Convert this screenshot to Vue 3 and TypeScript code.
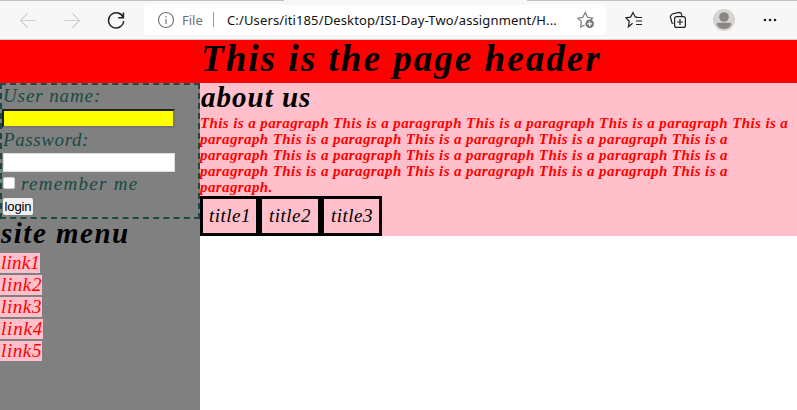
<script setup lang="ts">
import { ref } from 'vue'

interface Item {
  label: string
  kind: string
}

const userName = ref('')
const password = ref('')
const remember = ref(false)

const links: Item[] = [
  { label: 'link1', kind: 'narrow' },
  { label: 'link2', kind: 'medium' },
  { label: 'link3', kind: 'medium' },
  { label: 'link4', kind: 'wide' },
  { label: 'link5', kind: 'medium' },
]
const titles: Item[] = [
  { label: 'title1', kind: 'first' },
  { label: 'title2', kind: 'second' },
  { label: 'title3', kind: 'third' },
]
const paragraph: string = Array(17).fill('This is a paragraph').join(' ') + '.'
</script>

<template>
  <div class="window">
    <header class="toolbar">
      <svg class="nav muted" viewBox="0 0 18 18"><path d="M17 9.5H1.5M8.5 2.5l-7 7 7 7" /></svg>
      <svg class="nav muted forward" viewBox="0 0 18 18"><path d="M1 9.5h15.5M9.5 2.5l7 7-7 7" /></svg>
      <svg class="nav reload" viewBox="0 0 18 18"><path d="M16.4 7.1A7.6 7.6 0 1 0 16.7 10M16.4 1.5v5.2h-5.2" /></svg>
      <div class="address">
        <svg class="info" viewBox="0 0 18 18"><circle cx="9" cy="9" r="7.5" /><path d="M9 8v5M9 5v1.4" /></svg>
        <span class="scheme">File</span>
        <span class="divider"></span>
        <span class="url">C:/Users/iti185/Desktop/ISI-Day-Two/assignment/H...</span>
        <svg class="favourite" viewBox="0 0 18 18">
          <path d="M7.5 14 3.7 16l.7-5.3L1 7.2l4.8-.9L8.3 1.5l2.3 4.8 5 .8-2 2" />
          <circle cx="12.7" cy="12.8" r="4.3" />
          <path class="plus" d="M10.3 12.8h4.8M12.7 10.4v4.8" />
        </svg>
      </div>
      <svg class="tool stars" viewBox="0 0 18 18"><path d="M7.6 12.2 3.4 15.8l.8-5.5L1 6.7l4.6-.6L8 1.5l2.2 4.4 2.3.4M11 6.5h6M11 10h6M11 13.5h6" /></svg>
      <svg class="tool collections" viewBox="0 0 18 18"><path d="M4.5 12.4 3 12 1.3 5.5 3.2 3 10 1.4l2.2.9.7 2.5" /><rect x="5.6" y="5.6" width="10.8" height="10.8" rx="2" /><path d="M11 8v6M8 11h6" /></svg>
      <svg class="avatar" viewBox="0 0 22 22"><circle class="disc" cx="11" cy="11" r="11" /><circle cx="11" cy="8" r="4.8" /><path d="M3.5 15.2q0-1.5 1.8-1.5h11.4q1.8 0 1.8 1.5-2.2 4.8-7.5 4.8t-7.5-4.8" /></svg>
      <svg class="more" viewBox="0 0 14 4"><circle cx="2" cy="2" r="1.3" /><circle cx="7" cy="2" r="1.3" /><circle cx="12" cy="2" r="1.3" /></svg>
    </header>

    <h1 class="page-header">This is the page header</h1>

    <div class="content">
      <aside class="sidebar">
        <form class="login" @submit.prevent>
          <label class="user-label" for="user">User name:</label>
          <input id="user" v-model="userName" class="field highlighted" type="text" />
          <label class="password-label" for="password">Password:</label>
          <input id="password" v-model="password" class="field" type="password" />
          <label class="remember"><input v-model="remember" type="checkbox" /><span>remember me</span></label>
          <button type="submit">login</button>
        </form>
        <h2 class="menu-heading">site menu</h2>
        <nav class="menu">
          <a v-for="link in links" :key="link.label" :class="link.kind">{{ link.label }}</a>
        </nav>
      </aside>
      <main class="about">
        <h2 class="about-heading">about us</h2>
        <p>{{ paragraph }}</p>
        <div class="titles">
          <div v-for="title in titles" :key="title.label" :class="title.kind">{{ title.label }}</div>
        </div>
      </main>
    </div>
  </div>
</template>

<style>
body { margin: 0; overflow: hidden; background: #fff; }
</style>

<style scoped>
* { box-sizing: border-box; }
.window { width: 797px; height: 410px; display: flex; flex-direction: column; overflow: hidden; font-family: "Lucida Calligraphy", "Liberation Serif", serif; font-style: italic; font-size: 19px; }
.toolbar { height: 40px; flex: none; display: flex; align-items: center; padding-left: 19px; background: linear-gradient(90deg, #c2c2c2 284px, #f7f7f7 284px, #f7f7f7 527px, #c2c2c2 527px) top / 100% 1px no-repeat, #f7f7f7; border-bottom: 1px solid #d0d0d0; font-family: "Noto Sans", sans-serif; font-style: normal; }
svg { flex: none; fill: none; stroke: #202020; stroke-width: 1.2; }
.nav { width: 18px; height: 18px; }
.muted { stroke: #cfcfcf; }
.forward { margin-left: 26px; }
.reload { margin-left: 26px; stroke-width: 1.5; }
.address { width: 462px; height: 30px; margin-left: 19px; padding-left: 13px; display: flex; align-items: center; background: #fff; border-radius: 4px; white-space: nowrap; }
.info { width: 18px; height: 18px; stroke: #777; }
.scheme { width: 31px; margin-left: 7px; font-size: 13px; color: #707070; }
.divider { width: 1px; height: 15px; background: #999; }
.url { width: 331px; margin-left: 13px; font-size: 13px; letter-spacing: 0.13px; color: #111; }
.favourite { width: 18px; height: 18px; margin-left: 19px; stroke: #777; }
.favourite circle { fill: #777; stroke: none; }
.favourite .plus { stroke: #fff; }
.tool { width: 18px; height: 18px; }
.stars { margin-left: 19px; }
.collections { margin-left: 26px; }
.avatar { width: 22px; height: 22px; margin-left: 26px; fill: #8a8783; stroke: none; }
.avatar .disc { fill: #d6d4d0; }
.more { width: 14px; height: 4px; margin-left: 28px; fill: #202020; stroke: none; }

.page-header { height: 43px; flex: none; margin: 0; padding-left: 201px; background: red; color: #000; font-size: 37px; line-height: 38px; letter-spacing: 2.05px; white-space: nowrap; }
.content { flex: 1; display: flex; align-items: flex-start; }
.sidebar { width: 200px; height: 327px; background: gray; }
.login { height: 136px; padding: 0 1px; border: 2px dashed #194a43; color: #194a43; display: flex; flex-direction: column; align-items: flex-start; }
.login > label { height: 24px; line-height: 21px; white-space: nowrap; }
.login .user-label { letter-spacing: 0.9px; }
.login .password-label { height: 25px; line-height: 24px; letter-spacing: 0.6px; }
.field { width: 173px; height: 19px; margin: 0 0 0 -1px; padding: 1px; border: 2px inset #767676; border-radius: 0; background: #fff; }
.field:not(.highlighted) { width: 172px; margin-left: 0; border: 1px solid #ddd; }
.highlighted { background: #ff0; border-color: #202020 #767676 #767676 #202020; border-style: solid; }
.login > .remember { display: flex; height: 26px; line-height: 24px; letter-spacing: 1.3px; }
.remember input { width: 12px; height: 12px; margin: 5px 6px 0 0; appearance: none; background: #fff; border: 1px solid #d0d0d0; border-radius: 2px; }
button { width: 30px; height: 17px; padding: 0; border: 0; border-radius: 2px; background: #efefef; color: #000; font: 13px/17px "Liberation Sans", sans-serif; letter-spacing: -0.1px; }
h2 { margin: 0; font-size: 29px; white-space: nowrap; color: #000; }
.menu-heading { height: 34px; padding-left: 1px; line-height: 29px; letter-spacing: 1.5px; }
.menu { display: flex; flex-direction: column; align-items: flex-start; gap: 2px; }
.menu a { height: 20px; padding-left: 1px; background: pink; color: red; line-height: 20px; letter-spacing: 0.6px; white-space: nowrap; }
.menu .narrow { width: 40px; letter-spacing: 0.2px; }
.menu .medium { width: 42px; }
.menu .wide { width: 43px; letter-spacing: 0.8px; }
.about { width: 597px; height: 153px; background: pink; }
.about-heading { height: 32px; padding-left: 1px; line-height: 28px; letter-spacing: 1px; }
.about p { height: 81px; margin: 0; color: red; font-size: 15px; font-weight: bold; line-height: 16px; letter-spacing: 0.4px; }
.titles { display: flex; }
.titles > div { height: 40px; padding-left: 6px; border: 3px solid #000; line-height: 33px; letter-spacing: 0.5px; }
.titles .first { width: 59px; }
.titles .second { width: 62px; padding-left: 7px; }
.titles .third { width: 61px; padding-left: 7px; }
</style>
